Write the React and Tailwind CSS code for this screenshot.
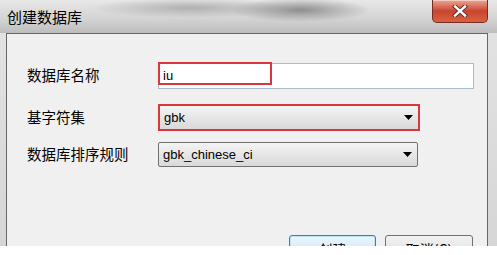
import { useState } from 'react'

const cjk = "font-['Noto_Sans_CJK_SC','Microsoft_YaHei',sans-serif]"
const latin = "font-['Liberation_Sans',Arial,sans-serif]"

function Arrow() {
  return (
    <svg width="9" height="5" viewBox="0 0 9 5" className="shrink-0">
      <path d="M0 0h9L4.5 5z" fill="#000" />
    </svg>
  )
}

function CloseButton() {
  return (
    <button
      type="button"
      aria-label="Close"
      className="flex h-[23px] w-[56px] items-center justify-center rounded-b-[5px] border border-t-0 border-[#7a2a1e] bg-linear-to-b from-[#e9a594] via-[#c9442f] to-[#d9623f] shadow-[inset_0_1px_0_rgba(255,255,255,0.45)]"
    >
      <svg width="16" height="12" viewBox="0 0 16 12">
        <path d="M3 1.5l10 9M13 1.5l-10 9" stroke="#5a2a22" strokeWidth="4.2" strokeLinecap="square" />
        <path d="M3 1.5l10 9M13 1.5l-10 9" stroke="#fff" strokeWidth="2.4" strokeLinecap="square" />
      </svg>
    </button>
  )
}

function Label({ children }) {
  return <span className={`${cjk} w-[131px] shrink-0 text-[14.5px] leading-none text-black`}>{children}</span>
}

export default function App() {
  const [name, setName] = useState('iu')

  return (
    <div className="h-[255px] w-[497px] overflow-hidden bg-white">
      <div className="flex h-[246px] flex-col bg-linear-to-b from-[#e4e4e4] to-[#d6d6d6]">
        <div className="flex h-[33px] shrink-0 items-start justify-between bg-[radial-gradient(ellipse_70px_12px_at_300px_10px,#8e8e8e,transparent),radial-gradient(ellipse_100px_10px_at_190px_8px,#b0b0b0,transparent),linear-gradient(to_bottom,#e8e8e8,#d2d2d2_60%,#bdbdbd)] pr-[9px]">
          <span className={`${cjk} pl-[7px] pt-[7px] text-[15px] leading-[20px] text-black`}>创建数据库</span>
          <CloseButton />
        </div>

        <div className="ml-[6px] mr-[9px] flex flex-1 flex-col overflow-hidden border border-b-0 border-[#666] bg-[#f0f0f0] pl-[20px] pt-[28px]">
          <div className="flex items-center">
            <Label>数据库名称</Label>
            <div className="relative h-[26px] w-[316px]">
              <input
                value={name}
                onChange={(e) => setName(e.target.value)}
                className={`${latin} h-full w-full border border-[#a9bccd] bg-white px-[4px] text-[13px] text-black outline-none`}
              />
              <div className="pointer-events-none absolute left-0 top-0 h-[23px] w-[114px] border-2 border-[#d9363e]" />
            </div>
          </div>

          <div className="mt-[16px] flex items-center">
            <Label>基字符集</Label>
            <div className="flex h-[27px] w-[262px] items-center justify-between border-2 border-[#d9363e] bg-linear-to-b from-[#f4f4f4] to-[#d9d9d9] pl-[4px] pr-[5px]">
              <span className={`${latin} text-[13px] text-black`}>gbk</span>
              <Arrow />
            </div>
          </div>

          <div className="mt-[11px] flex items-center">
            <Label>数据库排序规则</Label>
            <div className="flex h-[25px] w-[260px] items-center justify-between rounded-[2px] border border-[#707070] bg-linear-to-b from-[#f4f4f4] to-[#d9d9d9] pl-[4px] pr-[5px]">
              <span className={`${latin} text-[13px] text-black`}>gbk_chinese_ci</span>
              <Arrow />
            </div>
          </div>

          <div className="mt-[68px] flex justify-end gap-[9px] pr-[14px]">
            <button
              type="button"
              className={`${cjk} h-[27px] w-[87px] rounded-[3px] border border-[#3c7fb1] bg-linear-to-b from-[#eaf6fd] to-[#c6e4f6] pt-[1px] text-[14px] leading-none text-black shadow-[inset_0_0_0_1px_#bfe4f8]`}
            >
              创建
            </button>
            <button
              type="button"
              className={`${cjk} h-[27px] w-[88px] rounded-[3px] border border-[#707070] bg-linear-to-b from-[#f2f2f2] to-[#dcdcdc] pt-[1px] text-[14px] leading-none text-black`}
            >
              取消(C)
            </button>
          </div>
        </div>
      </div>
    </div>
  )
}
